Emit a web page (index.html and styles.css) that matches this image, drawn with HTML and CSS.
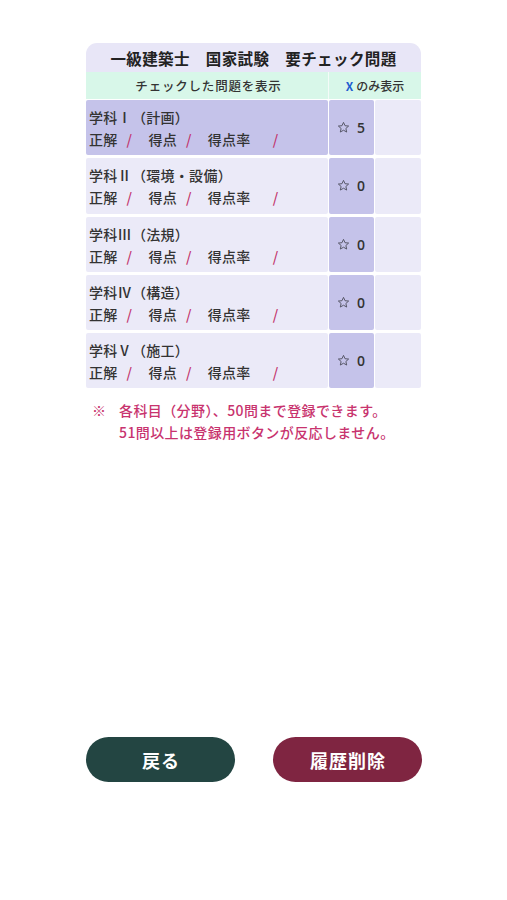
FILE: index.html
```html
<!DOCTYPE html>
<html lang="ja">
<head>
<meta charset="utf-8">
<link rel="stylesheet" href="styles.css">
</head>
<body>
<div class="page">
  <div class="card">
    <div class="title">一級建築士　国家試験　要チェック問題</div>
    <div class="head">
      <div class="head-main">チェックした問題を表示</div>
      <div class="head-side"><span class="x">X</span>のみ表示</div>
    </div>
    <div class="rows">
      <div class="row active">
        <div class="info">
          <div class="name">学科Ⅰ（計画）</div>
          <div class="score"><span class="lbl">正解</span><span class="sl">/</span><span class="lbl">得点</span><span class="sl">/</span><span class="lbl">得点率</span><span class="sl last">/</span></div>
        </div>
        <div class="star"><svg class="star-ic" width="13" height="13" viewBox="0 0 24 24"><path d="M12 2.5l2.8 6.2 6.7.6-5.1 4.5 1.5 6.6L12 17l-5.9 3.4 1.5-6.6-5.1-4.5 6.7-.6z"></path></svg><span class="num">5</span></div>
        <div class="side"></div>
      </div>
      <div class="row">
        <div class="info">
          <div class="name">学科Ⅱ（環境・設備）</div>
          <div class="score"><span class="lbl">正解</span><span class="sl">/</span><span class="lbl">得点</span><span class="sl">/</span><span class="lbl">得点率</span><span class="sl last">/</span></div>
        </div>
        <div class="star"><svg class="star-ic" width="13" height="13" viewBox="0 0 24 24"><path d="M12 2.5l2.8 6.2 6.7.6-5.1 4.5 1.5 6.6L12 17l-5.9 3.4 1.5-6.6-5.1-4.5 6.7-.6z"></path></svg><span class="num">0</span></div>
        <div class="side"></div>
      </div>
      <div class="row">
        <div class="info">
          <div class="name">学科Ⅲ（法規）</div>
          <div class="score"><span class="lbl">正解</span><span class="sl">/</span><span class="lbl">得点</span><span class="sl">/</span><span class="lbl">得点率</span><span class="sl last">/</span></div>
        </div>
        <div class="star"><svg class="star-ic" width="13" height="13" viewBox="0 0 24 24"><path d="M12 2.5l2.8 6.2 6.7.6-5.1 4.5 1.5 6.6L12 17l-5.9 3.4 1.5-6.6-5.1-4.5 6.7-.6z"></path></svg><span class="num">0</span></div>
        <div class="side"></div>
      </div>
      <div class="row">
        <div class="info">
          <div class="name">学科Ⅳ（構造）</div>
          <div class="score"><span class="lbl">正解</span><span class="sl">/</span><span class="lbl">得点</span><span class="sl">/</span><span class="lbl">得点率</span><span class="sl last">/</span></div>
        </div>
        <div class="star"><svg class="star-ic" width="13" height="13" viewBox="0 0 24 24"><path d="M12 2.5l2.8 6.2 6.7.6-5.1 4.5 1.5 6.6L12 17l-5.9 3.4 1.5-6.6-5.1-4.5 6.7-.6z"></path></svg><span class="num">0</span></div>
        <div class="side"></div>
      </div>
      <div class="row">
        <div class="info">
          <div class="name">学科Ⅴ（施工）</div>
          <div class="score"><span class="lbl">正解</span><span class="sl">/</span><span class="lbl">得点</span><span class="sl">/</span><span class="lbl">得点率</span><span class="sl last">/</span></div>
        </div>
        <div class="star"><svg class="star-ic" width="13" height="13" viewBox="0 0 24 24"><path d="M12 2.5l2.8 6.2 6.7.6-5.1 4.5 1.5 6.6L12 17l-5.9 3.4 1.5-6.6-5.1-4.5 6.7-.6z"></path></svg><span class="num">0</span></div>
        <div class="side"></div>
      </div>
    </div>
  </div>
  <div class="note">
    <span class="mark">※</span>
    <div class="note-text">各科目（分野）、50問まで登録できます。<br>51問以上は登録用ボタンが反応しません。</div>
  </div>
  <div class="buttons">
    <button class="btn back">戻る</button>
    <button class="btn clear">履歴削除</button>
  </div>
</div>
</body>
</html>
```

FILE: styles.css
```css
* { box-sizing: border-box; }
html, body { margin: 0; padding: 0; background: #ffffff; }
body {
  font-family: "Noto Sans CJK JP", "Noto Sans", sans-serif;
  color: #333333;
}
.page {
  width: 335px;
  margin: 0 auto;
  padding-top: 43px;
}
.card {
  display: flex;
  flex-direction: column;
}
.title {
  height: 29px;
  background: #e8e6f7;
  border-radius: 11px 11px 0 0;
  font-size: 15.5px;
  font-weight: 700;
  letter-spacing: 0.4px;
  color: #222222;
  display: flex;
  align-items: center;
  justify-content: center;
  padding-top: 1px;
}
.head {
  height: 27px;
  display: flex;
  gap: 1px;
  background: #f4fbf8;
}
.head-main, .head-side {
  background: #d8f7e9;
  display: flex;
  align-items: center;
  justify-content: center;
  font-size: 12.5px;
  font-weight: 500;
  color: #333333;
}
.head-main { width: 242px; flex: none; letter-spacing: 0.8px; padding-left: 3px; }
.head-side { flex: 1 1 auto; font-size: 12px; }
.x { color: #1f5fd0; font-weight: 700; margin-right: 3px; }
.rows {
  margin-top: 1px;
  display: flex;
  flex-direction: column;
  gap: 3px;
}
.row {
  height: 55.3px;
  display: grid;
  grid-template-columns: 242px 45px 46px;
  column-gap: 1px;
}
.info {
  background: #ebeaf8;
  border-radius: 2px;
  padding-left: 3px;
  display: flex;
  flex-direction: column;
  justify-content: center;
  font-size: 14px;
  font-weight: 500;
  line-height: 22px;
  letter-spacing: 0.3px;
  padding-top: 1px;
}
.row.active .info { background: #c5c3ea; }
.star {
  background: #c5c3ea;
  border-radius: 2px;
  display: flex;
  align-items: center;
  justify-content: center;
  gap: 7px;
  padding-right: 1px;
}
.star-ic {
  display: block;
  fill: none;
  stroke: #555566;
  stroke-width: 1.8;
  stroke-linejoin: round;
}
.num {
  font-family: "Open Sans", "Noto Sans", sans-serif;
  font-size: 14px;
  font-weight: 600;
  color: #333333;
}
.side {
  background: #ebeaf8;
  border-radius: 2px;
}
.score { display: flex; }
.sl { color: #c2336c; margin: 0 16px 0 9px; }
.sl.last { margin-left: 22px; }
.note {
  display: flex;
  margin-top: 11px;
  color: #c8336e;
  font-size: 14px;
  font-weight: 500;
  line-height: 22px;
  letter-spacing: 0.4px;
}
.mark { width: 33px; padding-left: 6px; }
.buttons {
  margin-top: 294px;
  display: flex;
  justify-content: space-between;
}
.btn {
  width: 149px;
  height: 45px;
  border: none;
  border-radius: 23px;
  color: #ffffff;
  font-family: "Noto Sans CJK JP", "Noto Sans", sans-serif;
  font-size: 18px;
  font-weight: 700;
  letter-spacing: 1px;
  padding: 0 0 0 1px;
}
.back { background: #234542; }
.clear { background: #7f2541; margin-right: -1px; }
```
